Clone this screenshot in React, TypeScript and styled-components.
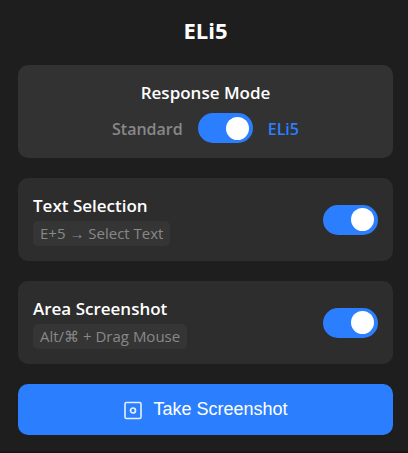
import React, { useState } from "react";
import styled, { createGlobalStyle } from "styled-components";

const GlobalStyle = createGlobalStyle`
  * { box-sizing: border-box; }
  body {
    margin: 0;
    background: #1e1e1e;
    color: #ffffff;
    font-family: "Segoe UI", "Open Sans", "Noto Sans", sans-serif;
  }
`;

const Popup = styled.main`
  display: flex;
  flex-direction: column;
  gap: 20px;
  padding: 15px 15px 16px 18px;
  border-bottom: 2px solid #1a1418;
`;

const Title = styled.h1`
  margin: 0;
  font-size: 22px;
  line-height: 30px;
  font-weight: 700;
  text-align: center;
`;

const ModeCard = styled.section`
  display: flex;
  flex-direction: column;
  align-items: center;
  gap: 8px;
  padding: 15px;
  border-radius: 10px;
  background: #323232;
`;

const Heading = styled.h2`
  margin: 0;
  font-size: 17px;
  line-height: 25px;
  font-weight: 600;
`;

const ModeRow = styled.div`
  display: flex;
  align-items: center;
  gap: 15px;
`;

const ModeLabel = styled.span<{ $active: boolean }>`
  padding-top: 2px;
  font-size: 16px;
  line-height: 24px;
  font-weight: 600;
  color: ${(p) => (p.$active ? "#2b7fff" : "#888888")};
`;

const FeatureCard = styled.section`
  display: flex;
  align-items: center;
  justify-content: space-between;
  padding: 15px;
  border-radius: 10px;
  background: #2d2d2d;
`;

const FeatureText = styled.div`
  display: flex;
  flex-direction: column;
  align-items: flex-start;
  gap: 3px;
`;

const Shortcut = styled.kbd`
  padding: 2px 7px;
  border-radius: 5px;
  background: #353535;
  color: #888888;
  font-family: inherit;
  font-size: 15px;
  line-height: 21px;
`;

const Switch = styled.input`
  appearance: none;
  flex: none;
  display: flex;
  align-items: center;
  width: 55px;
  height: 30px;
  margin: 0;
  padding: 0 4px;
  border-radius: 15px;
  background: #555555;
  cursor: pointer;

  &::before {
    content: "";
    width: 23px;
    height: 23px;
    border-radius: 50%;
    background: #ffffff;
  }

  &:checked {
    justify-content: flex-end;
    background: #2b7fff;
  }
`;

const CaptureButton = styled.button`
  display: flex;
  align-items: center;
  justify-content: center;
  gap: 10px;
  padding: 15px;
  border: 0;
  border-radius: 10px;
  background: #2b7fff;
  color: #ffffff;
  font-family: Arial, "Liberation Sans", sans-serif;
  font-size: 18px;
  line-height: 21px;
  cursor: pointer;
`;

const CaptureIcon = () => (
  <svg width="20" height="20" viewBox="0 0 20 20" fill="none" stroke="#e6f0ff" aria-hidden="true">
    <rect x="2" y="2.5" width="16" height="16" rx="1.5" strokeWidth="1.6" />
    <circle cx="10" cy="10.5" r="2.5" strokeWidth="1.7" />
  </svg>
);

type FeatureProps = { id: string; name: string; shortcut: string };

function Feature({ id, name, shortcut }: FeatureProps) {
  const [on, setOn] = useState(true);
  return (
    <FeatureCard>
      <FeatureText>
        <Heading as="label" htmlFor={id}>{name}</Heading>
        <Shortcut>{shortcut}</Shortcut>
      </FeatureText>
      <Switch id={id} type="checkbox" checked={on} onChange={(e) => setOn(e.target.checked)} />
    </FeatureCard>
  );
}

export default function App() {
  const [simple, setSimple] = useState(true);
  return (
    <>
      <GlobalStyle />
      <Popup>
        <Title>ELi5</Title>
        <ModeCard>
          <Heading id="mode-heading">Response Mode</Heading>
          <ModeRow>
            <ModeLabel $active={!simple}>Standard</ModeLabel>
            <Switch
              type="checkbox"
              aria-labelledby="mode-heading"
              checked={simple}
              onChange={(e) => setSimple(e.target.checked)}
            />
            <ModeLabel $active={simple}>ELi5</ModeLabel>
          </ModeRow>
        </ModeCard>
        <Feature id="text-selection" name="Text Selection" shortcut="E+5 → Select Text" />
        <Feature id="area-screenshot" name="Area Screenshot" shortcut="Alt/⌘ + Drag Mouse" />
        <CaptureButton type="button">
          <CaptureIcon />
          Take Screenshot
        </CaptureButton>
      </Popup>
    </>
  );
}
